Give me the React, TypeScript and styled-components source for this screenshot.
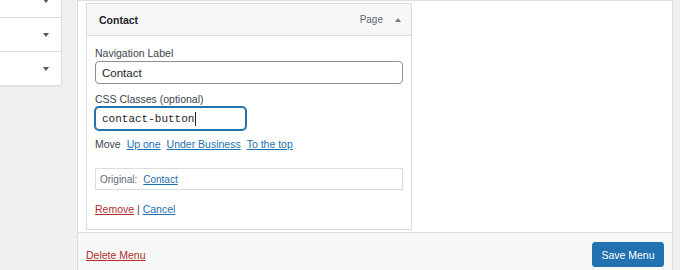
import styled, { createGlobalStyle } from 'styled-components';

const GlobalStyle = createGlobalStyle`
  html, body {
    margin: 0;
    padding: 0;
    background: #f0f0f1;
    font-family: "Liberation Sans", Arial, sans-serif;
    color: #3c434a;
  }
`;

const Page = styled.div`
  display: flex;
  height: 270px;
  width: 680px;
  overflow: hidden;
`;

const Sidebar = styled.div`
  width: 62px;
  flex-shrink: 0;
`;

const SideList = styled.div`
  margin-top: -16px;
  background: #fff;
  border-right: 1px solid #dcdcde;
  border-bottom: 1px solid #dcdcde;
  box-shadow: 0 1px 1px rgba(0, 0, 0, 0.04);
`;

const SideRow = styled.div`
  height: 33px;
  display: flex;
  align-items: center;
  justify-content: flex-end;
  padding-right: 12px;
  border-top: 1px solid #dcdcde;

  &:first-child {
    border-top: none;
  }
`;

const Caret = styled.span<{ $up?: boolean; $color?: string }>`
  display: inline-block;
  width: 0;
  height: 0;
  border-left: 3.5px solid transparent;
  border-right: 3.5px solid transparent;
  ${(p) =>
    p.$up
      ? `border-bottom: 4px solid ${p.$color || '#50575e'};`
      : `border-top: 4px solid ${p.$color || '#50575e'};`}
`;

const Main = styled.div`
  margin-left: 15px;
  width: 594px;
  flex-shrink: 0;
  display: flex;
  flex-direction: column;
  background: #fff;
  border: 1px solid #dcdcde;
  border-bottom: none;
`;

const Body = styled.div`
  flex: 1;
  padding: 2px 8px 0;
`;

const Card = styled.div`
  width: 324px;
  border: 1px solid #dcdcde;
  background: #fff;
`;

const CardHeader = styled.div`
  height: 31px;
  display: flex;
  align-items: center;
  padding: 0 10px 0 12px;
  background: #f6f7f7;
  border-bottom: 1px solid #dcdcde;
`;

const CardTitle = styled.span`
  flex: 1;
  font-size: 10.5px;
  font-weight: bold;
  color: #1d2327;
`;

const ItemType = styled.span`
  font-size: 10px;
  color: #646970;
  margin-right: 12px;
`;

const CardBody = styled.div`
  padding: 10px 8px 13px;
`;

const Field = styled.div`
  margin-bottom: 8px;
`;

const Label = styled.label`
  display: block;
  font-size: 10.5px;
  line-height: 14px;
  color: #3c434a;
  margin-bottom: 1px;
`;

const Input = styled.div<{ $focused?: boolean; $width?: string; $mono?: boolean }>`
  box-sizing: border-box;
  width: ${(p) => p.$width || '100%'};
  height: 23px;
  display: flex;
  align-items: center;
  padding: 0 6px;
  border: 1px solid ${(p) => (p.$focused ? '#2271b1' : '#8c8f94')};
  border-radius: 4px;
  box-shadow: ${(p) => (p.$focused ? '0 0 0 1px #2271b1' : 'none')};
  font-family: ${(p) =>
    p.$mono ? '"Liberation Mono", "DejaVu Sans Mono", monospace' : '"Liberation Sans", Arial, sans-serif'};
  font-size: ${(p) => (p.$mono ? '11px' : '11.5px')};
  color: #1d2327;
  background: #fff;
`;

const TextCaret = styled.span`
  display: inline-block;
  width: 1px;
  height: 14px;
  background: #1d2327;
  margin-left: 1px;
`;

const MoveRow = styled.div`
  display: flex;
  gap: 6px;
  font-size: 10.5px;
  line-height: 14px;
  margin-top: -1px;
  margin-bottom: 17px;
`;

const Link = styled.a<{ $danger?: boolean }>`
  color: ${(p) => (p.$danger ? '#b32d2e' : '#2271b1')};
  text-decoration: underline;
  cursor: pointer;
`;

const Original = styled.div`
  height: 22px;
  box-sizing: border-box;
  display: flex;
  align-items: center;
  gap: 6px;
  padding: 0 4px;
  border: 1px solid #dcdcde;
  font-size: 10px;
  color: #646970;
  margin-bottom: 12px;
`;

const Actions = styled.div`
  font-size: 10.5px;
  line-height: 14px;
  color: #3c434a;
`;

const Footer = styled.div`
  height: 27px;
  display: flex;
  align-items: center;
  justify-content: space-between;
  padding: 8px 8px 2px;
  background: #f6f7f7;
  border-top: 1px solid #dcdcde;
  font-size: 10.5px;
`;

const SaveButton = styled.button`
  height: 25px;
  width: 72px;
  padding: 0;
  background: #2271b1;
  border: 1px solid #2271b1;
  border-radius: 3px;
  color: #fff;
  font-family: "Liberation Sans", Arial, sans-serif;
  font-size: 10.5px;
  cursor: pointer;
`;

const App = () => {
  return (
    <>
      <GlobalStyle />
      <Page>
        <Sidebar>
          <SideList>
            {[0, 1, 2].map((i) => (
              <SideRow key={i}>
                <Caret />
              </SideRow>
            ))}
          </SideList>
        </Sidebar>

        <Main>
          <Body>
            <Card>
              <CardHeader>
                <CardTitle>Contact</CardTitle>
                <ItemType>Page</ItemType>
                <Caret $up $color="#787c82" />
              </CardHeader>
              <CardBody>
                <Field>
                  <Label>Navigation Label</Label>
                  <Input>Contact</Input>
                </Field>
                <Field>
                  <Label>CSS Classes (optional)</Label>
                  <Input $focused $mono $width="151px">
                    contact-button
                    <TextCaret />
                  </Input>
                </Field>
                <MoveRow>
                  <span>Move</span>
                  <Link>Up one</Link>
                  <Link>Under Business</Link>
                  <Link>To the top</Link>
                </MoveRow>
                <Original>
                  <span>Original:</span>
                  <Link>Contact</Link>
                </Original>
                <Actions>
                  <Link $danger>Remove</Link> | <Link>Cancel</Link>
                </Actions>
              </CardBody>
            </Card>
          </Body>
          <Footer>
            <Link $danger>Delete Menu</Link>
            <SaveButton>Save Menu</SaveButton>
          </Footer>
        </Main>
      </Page>
    </>
  );
};

export default App;
